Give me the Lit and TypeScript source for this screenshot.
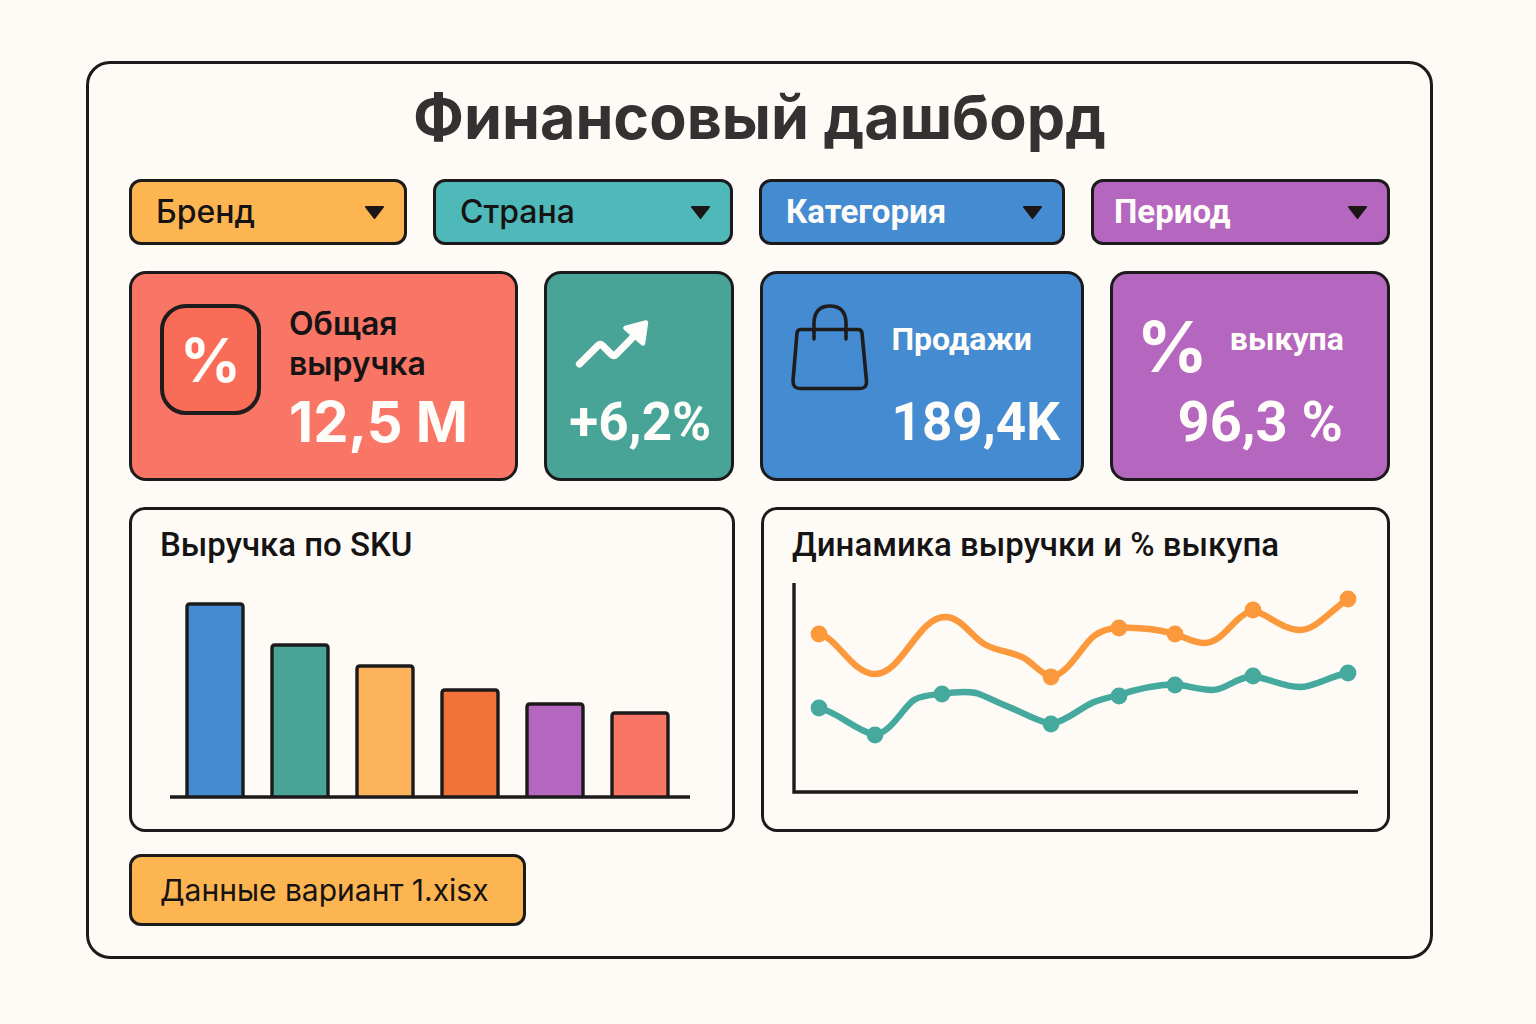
import { LitElement, html, svg, css } from "lit";
import { customElement, property } from "lit/decorators.js";

interface Filter {
  label: string;
  tone: string;
}

interface Bar {
  name: string;
  top: number;
  color: string;
}

const FILTERS: Filter[] = [
  { label: "Бренд", tone: "amber" },
  { label: "Страна", tone: "aqua" },
  { label: "Категория", tone: "blue" },
  { label: "Период", tone: "purple" },
];

const BARS: Bar[] = [
  { name: "blue", top: 29, color: "#448bd2" },
  { name: "green", top: 70, color: "#47a496" },
  { name: "amber", top: 91, color: "#fdb25c" },
  { name: "orange", top: 115, color: "#f1733a" },
  { name: "purple", top: 129, color: "#b567bf" },
  { name: "coral", top: 138, color: "#f97566" },
];

const REVENUE_DOTS = [[55, 59], [287, 102], [355, 53], [411, 59], [489, 35], [584, 24]];
const BUYOUT_DOTS = [[55, 133], [111, 160], [178, 119], [287, 149], [355, 121], [411, 110], [489, 101], [584, 98]];

@customElement("filter-select")
export class FilterSelect extends LitElement {
  @property() label = "";
  @property({ reflect: true }) tone = "amber";

  static styles = css`
    :host {
      display: block;
    }
    .field {
      display: grid;
      align-items: center;
    }
    .select {
      grid-area: 1 / 1;
      width: 100%;
      height: 66px;
      box-sizing: border-box;
      padding: 0 48px 0 24px;
      border: 3px solid #1c1a1b;
      border-radius: 12px;
      appearance: none;
      font: 500 32px/40px Inter, "Liberation Sans", sans-serif;
      color: #151313;
      cursor: pointer;
    }
    .amber {
      background: #fdb551;
    }
    .aqua {
      background: #4eb9b8;
    }
    .blue {
      background: #448bd2;
      color: #fffdfa;
      font: 700 33px/40px Roboto, "Liberation Sans", sans-serif;
    }
    .purple {
      background: #b567bf;
      color: #fffdfa;
      font: 700 33px/40px Roboto, "Liberation Sans", sans-serif;
      padding-left: 20px;
    }
    .caret {
      grid-area: 1 / 1;
      justify-self: end;
      margin-right: 22px;
      width: 21px;
      height: 14px;
      pointer-events: none;
    }
  `;

  render() {
    return html`
      <div class="field">
        <select class="select ${this.tone}" aria-label=${this.label}>
          <option>${this.label}</option>
        </select>
        <svg class="caret" viewBox="0 0 21 14" aria-hidden="true">
          <path d="M2 2H19L10.5 13Z" fill="#1c1616" stroke="#1c1616" stroke-width="2" stroke-linejoin="round" />
        </svg>
      </div>
    `;
  }
}

@customElement("sku-bars")
export class SkuBars extends LitElement {
  static styles = css`
    :host {
      display: block;
    }
    .plot {
      display: block;
      width: 100%;
      height: auto;
    }
  `;

  render() {
    return html`
      <svg class="plot" viewBox="0 0 600 254" role="img" aria-label="Выручка по SKU">
        ${BARS.map(
          (bar, i) => svg`
            <path
              d="M${55 + i * 85} 222V${bar.top + 3}q0 -3 3 -3h50q3 0 3 3V222"
              fill=${bar.color} stroke="#1c1a1b" stroke-width="3.4" />`
        )}
        <path d="M38 222H558" stroke="#1c1a1b" stroke-width="3.6" />
      </svg>
    `;
  }
}

@customElement("trend-lines")
export class TrendLines extends LitElement {
  static styles = css`
    :host {
      display: block;
    }
    .plot {
      display: block;
      width: 100%;
      height: auto;
    }
    .axis {
      fill: none;
      stroke: #1c1a1b;
      stroke-width: 3.4;
    }
    .line {
      fill: none;
      stroke-width: 6.4;
      stroke-linejoin: round;
    }
    .revenue {
      stroke: #fb993c;
    }
    .buyout {
      stroke: #45a99e;
    }
    .revenue-dot {
      fill: #fb993c;
    }
    .buyout-dot {
      fill: #45a99e;
    }
  `;

  render() {
    return html`
      <svg class="plot" viewBox="0 0 623 254" role="img" aria-label="Динамика выручки и % выкупа">
        <path class="axis" d="M30 8V217H594" />
        <path
          class="line revenue"
          d="M55 59C73 62 88 99 111 99C138 99 154 42 181 42C198 42 208 63 222 70C236 77 249 77 260 83C270 89 276 98 287 102C305 99 318 70 330 61C338 55 346 53 355 53C375 52 396 55 411 59C420 62 430 68 440 68C460 68 468 42 489 35C505 40 519 55 536 55C552 55 566 36 584 24"
        />
        <path
          class="line buyout"
          d="M55 133C76 138 90 155 111 160C128 157 140 131 150 125C158 120 168 120 178 119C190 117 202 116 212 118C222 121 232 127 245 132C260 138 272 146 287 149C303 146 316 133 330 127C338 124 346 122 355 120C373 114 390 110 411 109C424 111 437 115 448 115C462 115 470 103 489 101C506 104 520 112 536 112C550 112 566 101 584 98"
        />
        ${REVENUE_DOTS.map(([x, y]) => svg`<circle class="revenue-dot" cx=${x} cy=${y} r="8.4" />`)}
        ${BUYOUT_DOTS.map(([x, y]) => svg`<circle class="buyout-dot" cx=${x} cy=${y} r="8.4" />`)}
      </svg>
    `;
  }
}

@customElement("app-root")
export class AppRoot extends LitElement {
  static styles = css`
    :host {
      display: block;
      min-height: 100vh;
      box-sizing: border-box;
      padding: 61px 103px 64px 86px;
      background: #fefbf6;
      font-family: Roboto, "Liberation Sans", sans-serif;
      color: #151313;
    }
    .board {
      box-sizing: border-box;
      padding: 21px 40px 30px;
      border: 3px solid #1c1a1b;
      border-radius: 24px;
    }
    .title {
      margin: 0 0 30px;
      font-family: Inter, "Liberation Sans", sans-serif;
      font-size: 61px;
      line-height: 64px;
      font-weight: 700;
      text-align: center;
      color: #343132;
    }
    .filters {
      display: grid;
      grid-template-columns: 278fr 300fr 306fr 299fr;
      gap: 26px;
      margin-bottom: 26px;
    }
    .cards {
      display: grid;
      grid-template-columns: 389fr 190fr 323fr 280fr;
      gap: 26px;
      margin-bottom: 26px;
    }
    .card {
      display: flex;
      box-sizing: border-box;
      min-width: 0;
      min-height: 210px;
      padding: 30px 28px 24px;
      border: 3px solid #1c1a1b;
      border-radius: 17px;
      white-space: nowrap;
    }
    .coral {
      gap: 28px;
      background: #f97566;
      font-family: Inter, "Liberation Sans", sans-serif;
    }
    .green {
      flex-direction: column;
      justify-content: space-between;
      padding: 46px 20px 24px 22px;
      background: #47a496;
    }
    .blue {
      gap: 22px;
      background: #448bd2;
    }
    .purple {
      flex-direction: column;
      justify-content: space-between;
      padding-left: 24px;
      background: #b567bf;
    }
    .badge {
      display: grid;
      place-items: center;
      flex: none;
      box-sizing: border-box;
      width: 101px;
      height: 111px;
      border: 4px solid #1f1c1e;
      border-radius: 26px;
      background: #f96c58;
      color: #fffdfa;
      font-size: 60px;
      line-height: 60px;
      font-weight: 700;
    }
    .text {
      display: flex;
      flex-direction: column;
      justify-content: space-between;
    }
    .label {
      margin: 0;
      font-size: 32px;
      line-height: 40px;
      font-weight: 600;
    }
    .label-light {
      margin: 0;
      font-size: 32px;
      line-height: 70px;
      font-weight: 700;
      color: #fffdfa;
    }
    .value {
      margin: 0;
      font-size: 56px;
      line-height: 64px;
      font-weight: 700;
      color: #fffdfa;
    }
    .compact {
      font-size: 53px;
    }
    .head {
      display: flex;
      gap: 22px;
    }
    .sign {
      font-family: Inter, "Liberation Sans", sans-serif;
      font-size: 70px;
      line-height: 86px;
      font-weight: 700;
      color: #fffdfa;
    }
    .right {
      align-self: flex-end;
      margin-right: 16px;
    }
    .arrow {
      width: 76px;
      height: 50px;
      margin-left: 5px;
    }
    .bag {
      flex: none;
      width: 78px;
      height: 88px;
    }
    .charts {
      display: grid;
      grid-template-columns: 606fr 629fr;
      gap: 26px;
      margin-bottom: 22px;
    }
    .chart {
      border: 3px solid #1c1a1b;
      border-radius: 16px;
    }
    .heading {
      margin: 0;
      padding: 15px 28px 10px;
      font-size: 33px;
      line-height: 40px;
      font-weight: 500;
    }
    .file {
      height: 72px;
      padding: 0 34px 0 28px;
      border: 3px solid #1c1a1b;
      border-radius: 12px;
      background: #fdb551;
      color: #151313;
      font: 400 30px/40px Inter, "Liberation Sans", sans-serif;
      cursor: pointer;
    }
  `;

  render() {
    return html`
      <main class="board">
        <h1 class="title">Финансовый дашборд</h1>

        <div class="filters">
          ${FILTERS.map((f) => html`<filter-select label=${f.label} tone=${f.tone}></filter-select>`)}
        </div>

        <div class="cards">
          <section class="card coral">
            <span class="badge" aria-hidden="true">%</span>
            <div class="text">
              <h2 class="label">Общая<br />выручка</h2>
              <p class="value">12,5 M</p>
            </div>
          </section>

          <section class="card green">
            <svg class="arrow" viewBox="0 0 76 50" aria-hidden="true">
              <path d="M5.500 44L24 25.500Q26 23 28.500 25.500L37 34Q39.500 37 42 34.500L63 13" fill="none" stroke="#fffdfa" stroke-width="7.200" stroke-linecap="round" />
              <path d="M51.500 8L72 2.500L69 23.500Z" fill="#fffdfa" stroke="#fffdfa" stroke-width="4.500" stroke-linejoin="round" />
            </svg>
            <p class="value compact">+6,2%</p>
          </section>

          <section class="card blue">
            <svg class="bag" viewBox="0 0 78 88" aria-hidden="true" fill="none" stroke="#1f1c1e" stroke-width="3.600" stroke-linecap="round" stroke-linejoin="round">
              <path d="M10 25.500H67Q70.500 25.500 71 29L75.500 77Q76 84.500 69 84.500H9Q2 84.500 2 77L6 29Q6.500 25.500 10 25.500Z" />
              <path d="M23 35V18Q24 2 39 2Q54 2 55 18V35" />
            </svg>
            <div class="text">
              <h2 class="label-light">Продажи</h2>
              <p class="value compact">189,4K</p>
            </div>
          </section>

          <section class="card purple">
            <div class="head">
              <span class="sign">%</span>
              <h2 class="label-light">выкупа</h2>
            </div>
            <p class="value right">96,3 %</p>
          </section>
        </div>

        <div class="charts">
          <section class="chart">
            <h2 class="heading">Выручка по SKU</h2>
            <sku-bars></sku-bars>
          </section>
          <section class="chart">
            <h2 class="heading">Динамика выручки и % выкупа</h2>
            <trend-lines></trend-lines>
          </section>
        </div>

        <button class="file" type="button">Данные вариант 1.xisx</button>
      </main>
    `;
  }
}
